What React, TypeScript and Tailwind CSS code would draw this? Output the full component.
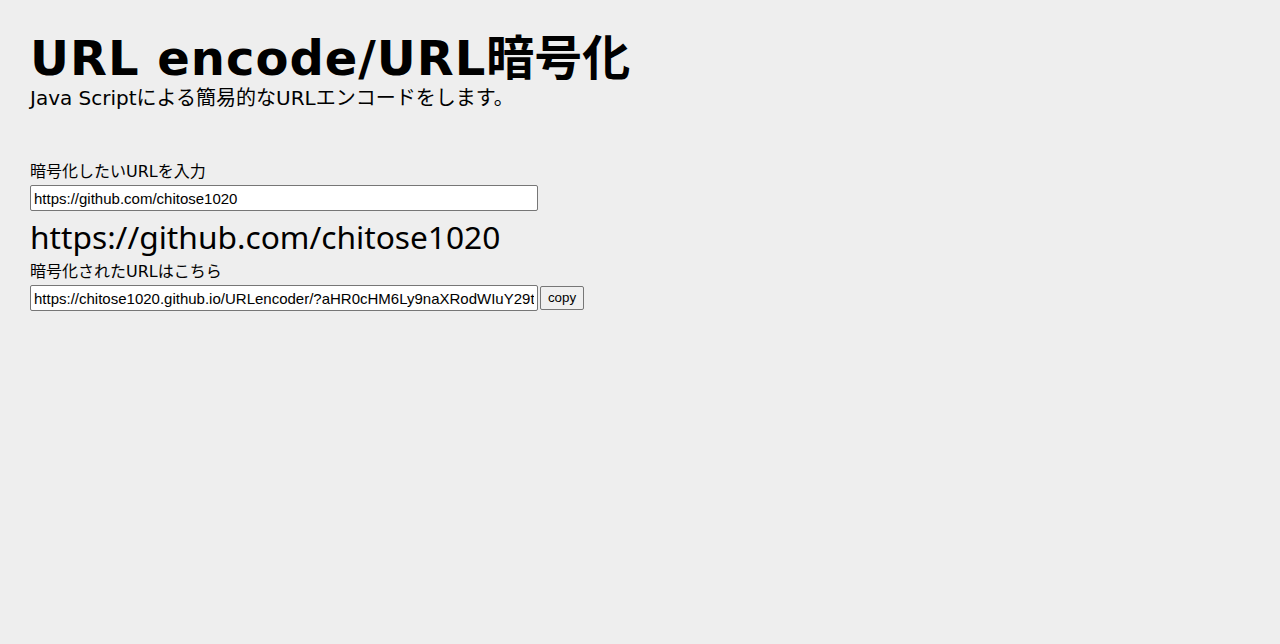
export default function App() {
  const dv = { fontFamily: '"DejaVu Sans", "Noto Sans CJK JP", sans-serif' };
  const ns = { fontFamily: '"Noto Sans", "Noto Sans CJK JP", sans-serif' };
  const ar = { fontFamily: '"Liberation Sans", Arial, sans-serif' };
  return (
    <div className="min-h-[644px] w-full bg-[#eeeeee] px-[30px] pt-[30px] text-black" style={dv}>
      <h1 className="m-0 text-[48px] font-bold leading-[56px]">
        <span className="tracking-[1px]">URL encode/URL</span>暗号化
      </h1>
      <p className="m-0 text-[20px] leading-[24px]">Java Scriptによる簡易的なURLエンコードをします。</p>
      <div className="mt-[50px] text-[16px] leading-[24px]">暗号化したいURLを入力</div>
      <input
        className="mt-[1px] block h-[26px] w-[508px] rounded-[2px] border border-[#767676] bg-white px-[3px] text-[15px] text-black"
        style={ar}
        defaultValue="https://github.com/chitose1020"
      />
      <div className="mt-[3px] text-[31.7px] leading-[46px]" style={ns}>https://github.com/chitose1020</div>
      <div className="text-[16px] leading-[24px]">暗号化されたURLはこちら</div>
      <div className="mt-[1px] flex items-center gap-[2px]">
        <input
          className="block h-[26px] w-[508px] rounded-[2px] border border-[#767676] bg-white px-[3px] text-[15px] text-black"
          style={ar}
          defaultValue="https://chitose1020.github.io/URLencoder/?aHR0cHM6Ly9naXRodWIuY29tL2NoaXRvc2UxMDIw"
        />
        <button
          className="h-[24px] w-[44px] rounded-[2px] border border-[#767676] bg-[#efefef] p-0 text-[13.33px] text-black"
          style={ar}
        >
          copy
        </button>
      </div>
    </div>
  );
}
